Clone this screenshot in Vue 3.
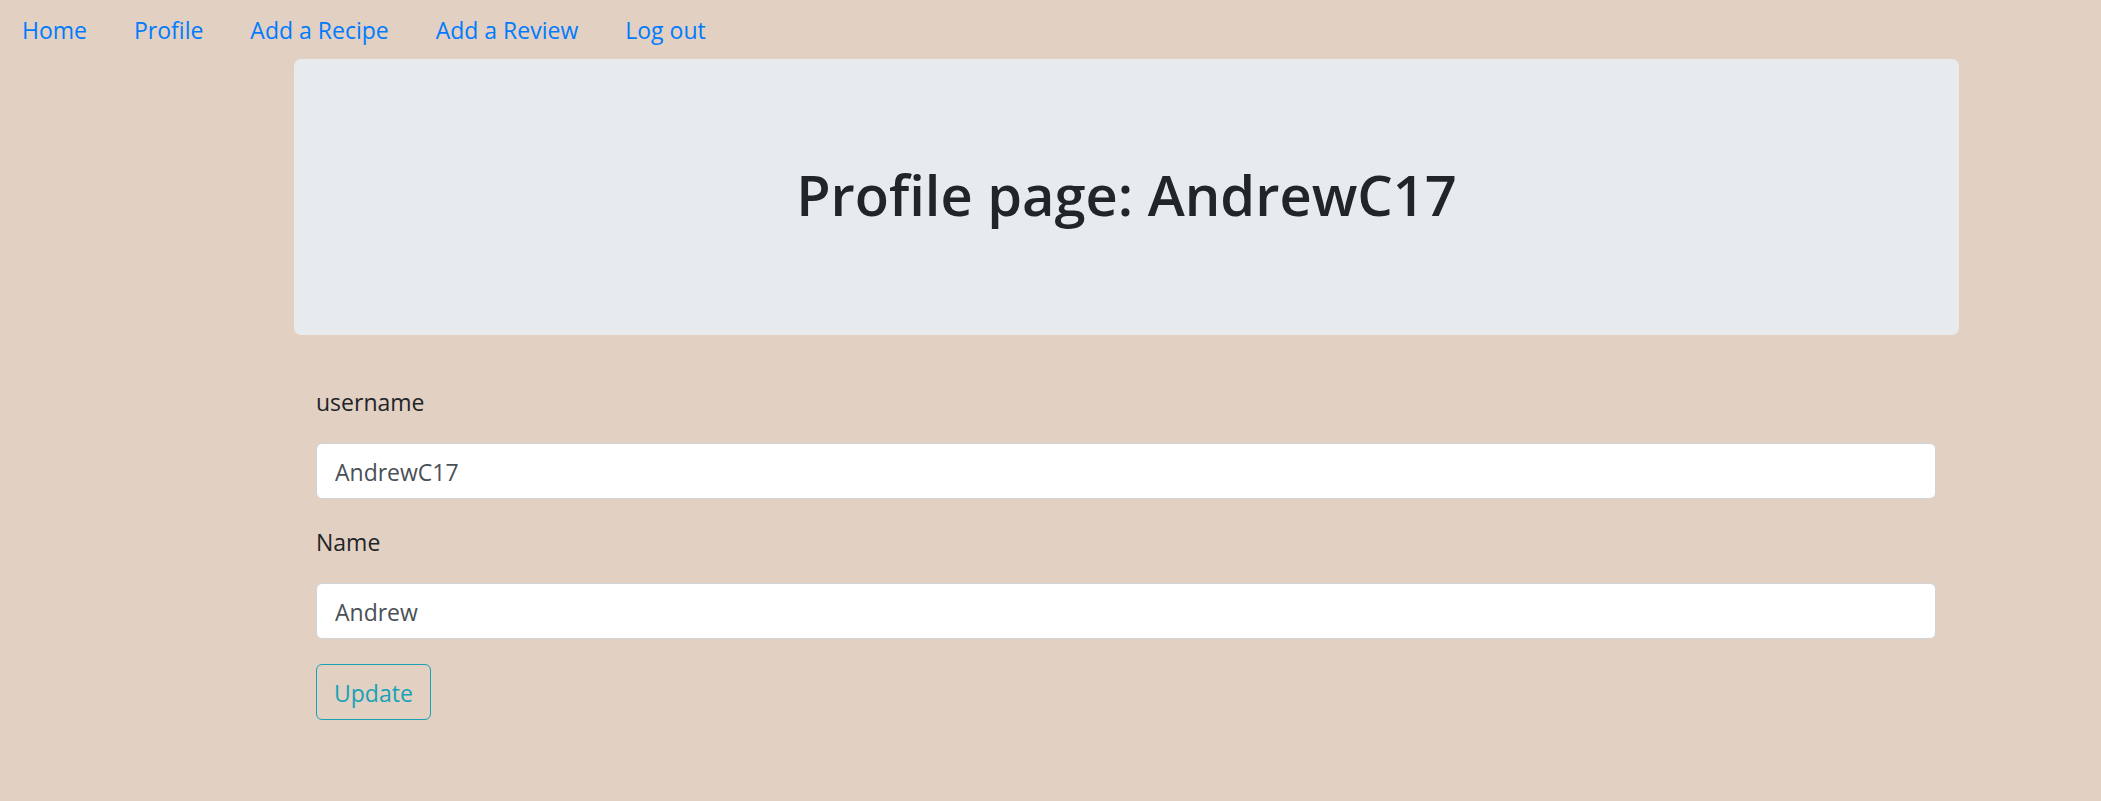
<script setup>
import { ref } from 'vue'

const links = ['Home', 'Profile', 'Add a Recipe', 'Add a Review', 'Log out']
const account = 'AndrewC17'
const username = ref('AndrewC17')
const name = ref('Andrew')
</script>

<template>
  <nav class="nav">
    <a v-for="link in links" :key="link" class="nav-link" href="#">{{ link }}</a>
  </nav>
  <main class="content">
    <header class="banner">
      <h1 class="title">Profile page: {{ account }}</h1>
    </header>
    <form class="form" @submit.prevent>
      <label class="label" for="username">username</label>
      <input id="username" v-model="username" class="field" type="text" />
      <label class="label" for="name">Name</label>
      <input id="name" v-model="name" class="field" type="text" />
      <button class="button" type="submit">Update</button>
    </form>
  </main>
</template>

<style>
body {
  margin: 0;
  background: #e2d0c2;
  color: #212529;
  font-family: "Open Sans", "Noto Sans", sans-serif;
  font-size: 23px;
  font-weight: 400;
  line-height: 36px;
}
</style>

<style scoped>
.nav {
  display: flex;
  flex-wrap: wrap;
  gap: 47px;
  padding: 12px 22px 11px;
}

.nav-link {
  color: #007bff;
  text-decoration: none;
}

.content {
  margin: 0 142px 0 294px;
}

.banner {
  padding: 99px 48px 105px;
  border-radius: 7px;
  background: #e8ebee;
  text-align: center;
}

.title {
  margin: 0;
  font-size: 56px;
  font-weight: 600;
  line-height: 72px;
}

.form {
  display: flex;
  flex-direction: column;
  align-items: flex-start;
  padding: 49px 23px 24px 22px;
}

.label {
  margin-bottom: 23px;
}

.field {
  box-sizing: border-box;
  width: 100%;
  height: 56px;
  margin: 0 0 25px;
  padding: 10px 18px 8px;
  border: 1px solid #ced4da;
  border-radius: 6px;
  background: #fff;
  color: #495057;
  font: inherit;
}

.button {
  height: 56px;
  padding: 10px 17px 8px;
  border: 1px solid #17a2b8;
  border-radius: 6px;
  background: transparent;
  color: #17a2b8;
  font: inherit;
  cursor: pointer;
}
</style>
